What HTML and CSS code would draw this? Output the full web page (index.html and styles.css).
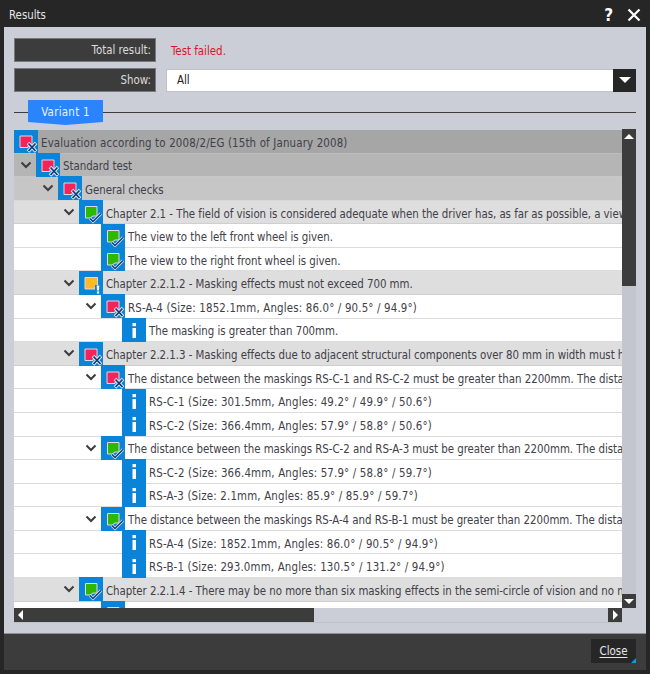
FILE: index.html
```html
<!DOCTYPE html>
<html lang="en">
<head>
<meta charset="utf-8">
<title>Results</title>
<link rel="stylesheet" href="styles.css">
</head>
<body>
<svg class="defs" width="0" height="0" aria-hidden="true">
  <symbol id="fail" viewBox="0 0 24 24">
    <rect width="24" height="24" fill="#0a84d8"/>
    <path d="M6 7H18V17H14V18.5H6Z" fill="#f5235a" stroke="#d9dbe2" stroke-width="1"/>
    <path d="M14 14L22 22.5M22 14L14 22.5" stroke="#e8eef8" stroke-width="3.4"/>
    <path d="M14.5 14.5L21.5 22M21.5 14.5L14.5 22" stroke="#123a78" stroke-width="1.8"/>
  </symbol>
  <symbol id="pass" viewBox="0 0 24 24">
    <rect width="24" height="24" fill="#0a84d8"/>
    <path d="M6.5 6.5H18V16H14L11 18H6.5Z" fill="#2fb800" stroke="#d9dbe2" stroke-width="1"/>
    <path d="M11 18.5L14 21.5L22 13.5" fill="none" stroke="#dfe8f5" stroke-width="3"/>
    <path d="M11 18.5L14 21.5L22 13.5" fill="none" stroke="#123a78" stroke-width="1.5"/>
  </symbol>
  <symbol id="warn" viewBox="0 0 24 24">
    <rect width="24" height="24" fill="#0a84d8"/>
    <path d="M6 6.5H18.5V16H16V18H6Z" fill="#ffb926" stroke="#d9dbe2" stroke-width="1"/>
    <rect x="16" y="14" width="6" height="9" fill="#0a84d8"/>
    <path d="M17.7 14.5H20.3L20 19.5H18Z" fill="#fff"/>
    <rect x="17.9" y="20.4" width="2.3" height="2.2" fill="#fff"/>
  </symbol>
  <symbol id="info" viewBox="0 0 24 24">
    <rect width="24" height="24" fill="#0a84d8"/>
    <rect x="10.5" y="5" width="3.5" height="3.2" fill="#fff"/>
    <rect x="10.5" y="10" width="3.5" height="10" fill="#fff"/>
  </symbol>
  <symbol id="chev" viewBox="0 0 12 8">
    <path d="M1.5 1.5L6 6L10.5 1.5" fill="none" stroke="#3c3c3c" stroke-width="2"/>
  </symbol>
</svg>
<main class="window">
  <header class="titlebar">
    <h1 class="title">Results</h1>
    <div class="title-actions">
      <span class="help">?</span>
      <svg class="close-x" width="14" height="14" viewBox="0 0 14 14"><path d="M1.5 1.5L12.5 12.5M12.5 1.5L1.5 12.5" stroke="#fff" stroke-width="2.2"/></svg>
    </div>
  </header>
  <section class="panel">
    <div class="field first">
      <div class="label">Total result:</div>
      <div class="failed">Test failed.</div>
    </div>
    <div class="field">
      <div class="label">Show:</div>
      <div class="select">
        <span class="select-value">All</span>
        <span class="select-btn"><svg width="14" height="8" viewBox="0 0 14 8"><path d="M1 1H13L7 7Z" fill="#fff"/></svg></span>
      </div>
    </div>
    <div class="tabs"><div class="tab">Variant 1</div></div>
    <div class="treebox">
      <div class="tree">
        <div class="row shade0 l0 num"><svg class="ico"><use href="#fail"/></svg><span>Evaluation according to 2008/2/EG (15th of January 2008)</span></div>
        <div class="row shade1 l1"><svg class="chev"><use href="#chev"/></svg><svg class="ico"><use href="#fail"/></svg><span>Standard test</span></div>
        <div class="row shade2 l2"><svg class="chev"><use href="#chev"/></svg><svg class="ico"><use href="#fail"/></svg><span>General checks</span></div>
        <div class="row shade3 l3"><svg class="chev"><use href="#chev"/></svg><svg class="ico"><use href="#pass"/></svg><span>Chapter 2.1 - The field of vision is considered adequate when the driver has, as far as possible, a view</span></div>
        <div class="row l4 leaf"><svg class="ico"><use href="#pass"/></svg><span>The view to the left front wheel is given.</span></div>
        <div class="row l4 leaf"><svg class="ico"><use href="#pass"/></svg><span>The view to the right front wheel is given.</span></div>
        <div class="row shade3 l3"><svg class="chev"><use href="#chev"/></svg><svg class="ico"><use href="#warn"/></svg><span>Chapter 2.2.1.2 - Masking effects must not exceed 700 mm.</span></div>
        <div class="row l4 num"><svg class="chev"><use href="#chev"/></svg><svg class="ico"><use href="#fail"/></svg><span>RS-A-4 (Size: 1852.1mm, Angles: 86.0° / 90.5° / 94.9°)</span></div>
        <div class="row l5 leaf"><svg class="ico"><use href="#info"/></svg><span>The masking is greater than 700mm.</span></div>
        <div class="row shade3 l3"><svg class="chev"><use href="#chev"/></svg><svg class="ico"><use href="#fail"/></svg><span>Chapter 2.2.1.3 - Masking effects due to adjacent structural components over 80 mm in width must have</span></div>
        <div class="row l4"><svg class="chev"><use href="#chev"/></svg><svg class="ico"><use href="#fail"/></svg><span>The distance between the maskings RS-C-1 and RS-C-2 must be greater than 2200mm. The distance is</span></div>
        <div class="row l5 leaf num"><svg class="ico"><use href="#info"/></svg><span>RS-C-1 (Size: 301.5mm, Angles: 49.2° / 49.9° / 50.6°)</span></div>
        <div class="row l5 leaf num"><svg class="ico"><use href="#info"/></svg><span>RS-C-2 (Size: 366.4mm, Angles: 57.9° / 58.8° / 50.6°)</span></div>
        <div class="row l4"><svg class="chev"><use href="#chev"/></svg><svg class="ico"><use href="#pass"/></svg><span>The distance between the maskings RS-C-2 and RS-A-3 must be greater than 2200mm. The distance is</span></div>
        <div class="row l5 leaf num"><svg class="ico"><use href="#info"/></svg><span>RS-C-2 (Size: 366.4mm, Angles: 57.9° / 58.8° / 59.7°)</span></div>
        <div class="row l5 leaf num"><svg class="ico"><use href="#info"/></svg><span>RS-A-3 (Size: 2.1mm, Angles: 85.9° / 85.9° / 59.7°)</span></div>
        <div class="row l4"><svg class="chev"><use href="#chev"/></svg><svg class="ico"><use href="#pass"/></svg><span>The distance between the maskings RS-A-4 and RS-B-1 must be greater than 2200mm. The distance is</span></div>
        <div class="row l5 leaf num"><svg class="ico"><use href="#info"/></svg><span>RS-A-4 (Size: 1852.1mm, Angles: 86.0° / 90.5° / 94.9°)</span></div>
        <div class="row l5 leaf num"><svg class="ico"><use href="#info"/></svg><span>RS-B-1 (Size: 293.0mm, Angles: 130.5° / 131.2° / 94.9°)</span></div>
        <div class="row shade3 l3"><svg class="chev"><use href="#chev"/></svg><svg class="ico"><use href="#pass"/></svg><span>Chapter 2.2.1.4 - There may be no more than six masking effects in the semi-circle of vision and no more</span></div>
        <div class="row l4 leaf"><svg class="ico"><use href="#pass"/></svg><span></span></div>
      </div>
      <div class="vscroll">
        <span class="sbtn"><svg width="12" height="7" viewBox="0 0 12 7"><path d="M1 6H11L6 1Z" fill="#fff"/></svg></span>
        <span class="vthumb"></span>
        <span class="sbtn"><svg width="12" height="7" viewBox="0 0 12 7"><path d="M1 1H11L6 6Z" fill="#fff"/></svg></span>
      </div>
      <div class="hscroll">
        <span class="hthumb"><svg width="7" height="10" viewBox="0 0 7 10"><path d="M6 0V10L1 5Z" fill="#fff"/></svg></span>
        <span class="hbtn"><svg width="7" height="10" viewBox="0 0 7 10"><path d="M1 0V10L6 5Z" fill="#fff"/></svg></span>
      </div>
    </div>
  </section>
  <footer class="footer">
    <button class="close" type="button">Close</button>
  </footer>
</main>
</body>
</html>
```
FILE: styles.css
```css
* { box-sizing: border-box; }
html, body { margin: 0; padding: 0; }
body { width: 650px; height: 674px; background: #262626; font-family: "DejaVu Sans", sans-serif; font-stretch: condensed; font-size: 11.4px; overflow: hidden; }
.defs { display: block; height: 0; }
.window { height: 674px; display: flex; flex-direction: column; padding: 0 4px 4px 4px; }
.titlebar { height: 27px; display: flex; align-items: center; justify-content: space-between; color: #e4e4e4; flex: none; }
.title { margin: 0; padding: 2px 0 0 5px; font-size: 11.4px; font-weight: 400; }
.title-actions { display: flex; align-items: center; gap: 14px; padding: 2px 5px 0 0; }
.help { color: #fff; font-size: 17px; font-weight: 700; line-height: 16px; }
.close-x { display: block; }
.panel { flex: 1; min-height: 0; background: #cbced6; padding: 11px 10px 10px 10px; display: flex; flex-direction: column; border-bottom: 1px solid #8f9096; }
.field { display: flex; height: 24px; margin-bottom: 6px; align-items: center; }
.label { width: 142px; height: 24px; background: #3c3c3c; border: 1px solid #77787c; color: #dcdcdc; text-align: right; line-height: 23px; padding-right: 4px; flex: none; }
.failed { margin-left: 15px; padding-top: 2px; color: #e0102f; }
.select { margin-left: 10px; flex: 1; height: 23px; background: #fff; border: 1px solid #bfc1c7; display: flex; align-items: center; justify-content: space-between; color: #222; }
.select-value { padding-left: 10px; }
.select-btn { width: 23px; height: 23px; margin-right: -1px; background: #262626; display: flex; align-items: center; justify-content: center; }
.tabs { height: 24px; margin-top: 2px; padding-left: 14px; background: linear-gradient(#3c3c3c, #3c3c3c) 0 12px / 100% 1px no-repeat; flex: none; }
.tab { width: 75px; height: 25px; background: #2a84fe; color: #e8f0ff; text-align: center; line-height: 24px; clip-path: polygon(0 0, 100% 0, 100% 88%, 50% 100%, 0 88%); letter-spacing: .3px; }
.treebox { margin-top: 6px; flex: 1; min-height: 0; display: grid; grid-template-columns: 1fr 14px; grid-template-rows: 1fr 15px; }
.tree { overflow: hidden; min-width: 0; min-height: 0; background: #fff; }
.row { height: 23.58px; display: flex; align-items: center; white-space: nowrap; color: #3f4048; border-bottom: 1px solid #dcdcdc; flex: none; letter-spacing: -.04px; }
.row span { margin-left: 3px; padding-top: 3px; }
.row.num { letter-spacing: .16px; }
.shade0 { background: #a6a6a6; border-bottom-color: #bdbdbd; }
.shade1 { background: #b5b5b5; border-bottom-color: #c8c8c8; }
.shade2 { background: #c6c6c6; border-bottom-color: #d8d8d8; }
.shade3 { background: #dedede; border-bottom-color: #cfcfcf; }
.ico { width: 24px; height: 24px; flex: none; }
.chev { width: 12px; height: 8px; flex: none; margin-right: 4px; }
.l0 { padding-left: 0; }
.l1 { padding-left: 6px; }
.l2 { padding-left: 28px; }
.l3 { padding-left: 49px; }
.l4 { padding-left: 71px; }
.l5 { padding-left: 108px; }
.l4.leaf { padding-left: 87px; }
.vscroll { grid-row: 1; grid-column: 2; display: flex; flex-direction: column; background: #c3c6cf; margin-top: -1px; }
.sbtn { height: 14px; background: #3c3c3c; display: flex; align-items: center; justify-content: center; flex: none; }
.vthumb { height: 143px; background: #3c3c3c; margin-bottom: auto; }
.hscroll { grid-row: 2; grid-column: 1; display: flex; justify-content: space-between; background: #cbced6; border-bottom: 1px solid #bfc1c7; }
.hthumb { width: 300px; background: #3c3c3c; display: flex; align-items: center; padding-left: 3px; }
.hbtn { width: 14px; background: #3c3c3c; display: flex; align-items: center; justify-content: center; }
.footer { height: 36px; background: #3c3c3c; flex: none; display: flex; justify-content: flex-end; align-items: flex-start; padding: 5px 10px 0 0; }
.close { position: relative; width: 45px; height: 24px; background: #262626; border: 0; padding: 0; color: #e6e6e6; font: inherit; text-decoration: underline; text-underline-offset: 2px; }
.close::after { content: ""; position: absolute; right: 0; bottom: 0; border-style: solid; border-width: 0 0 5px 5px; border-color: transparent transparent #0a9ae8 transparent; }
```
